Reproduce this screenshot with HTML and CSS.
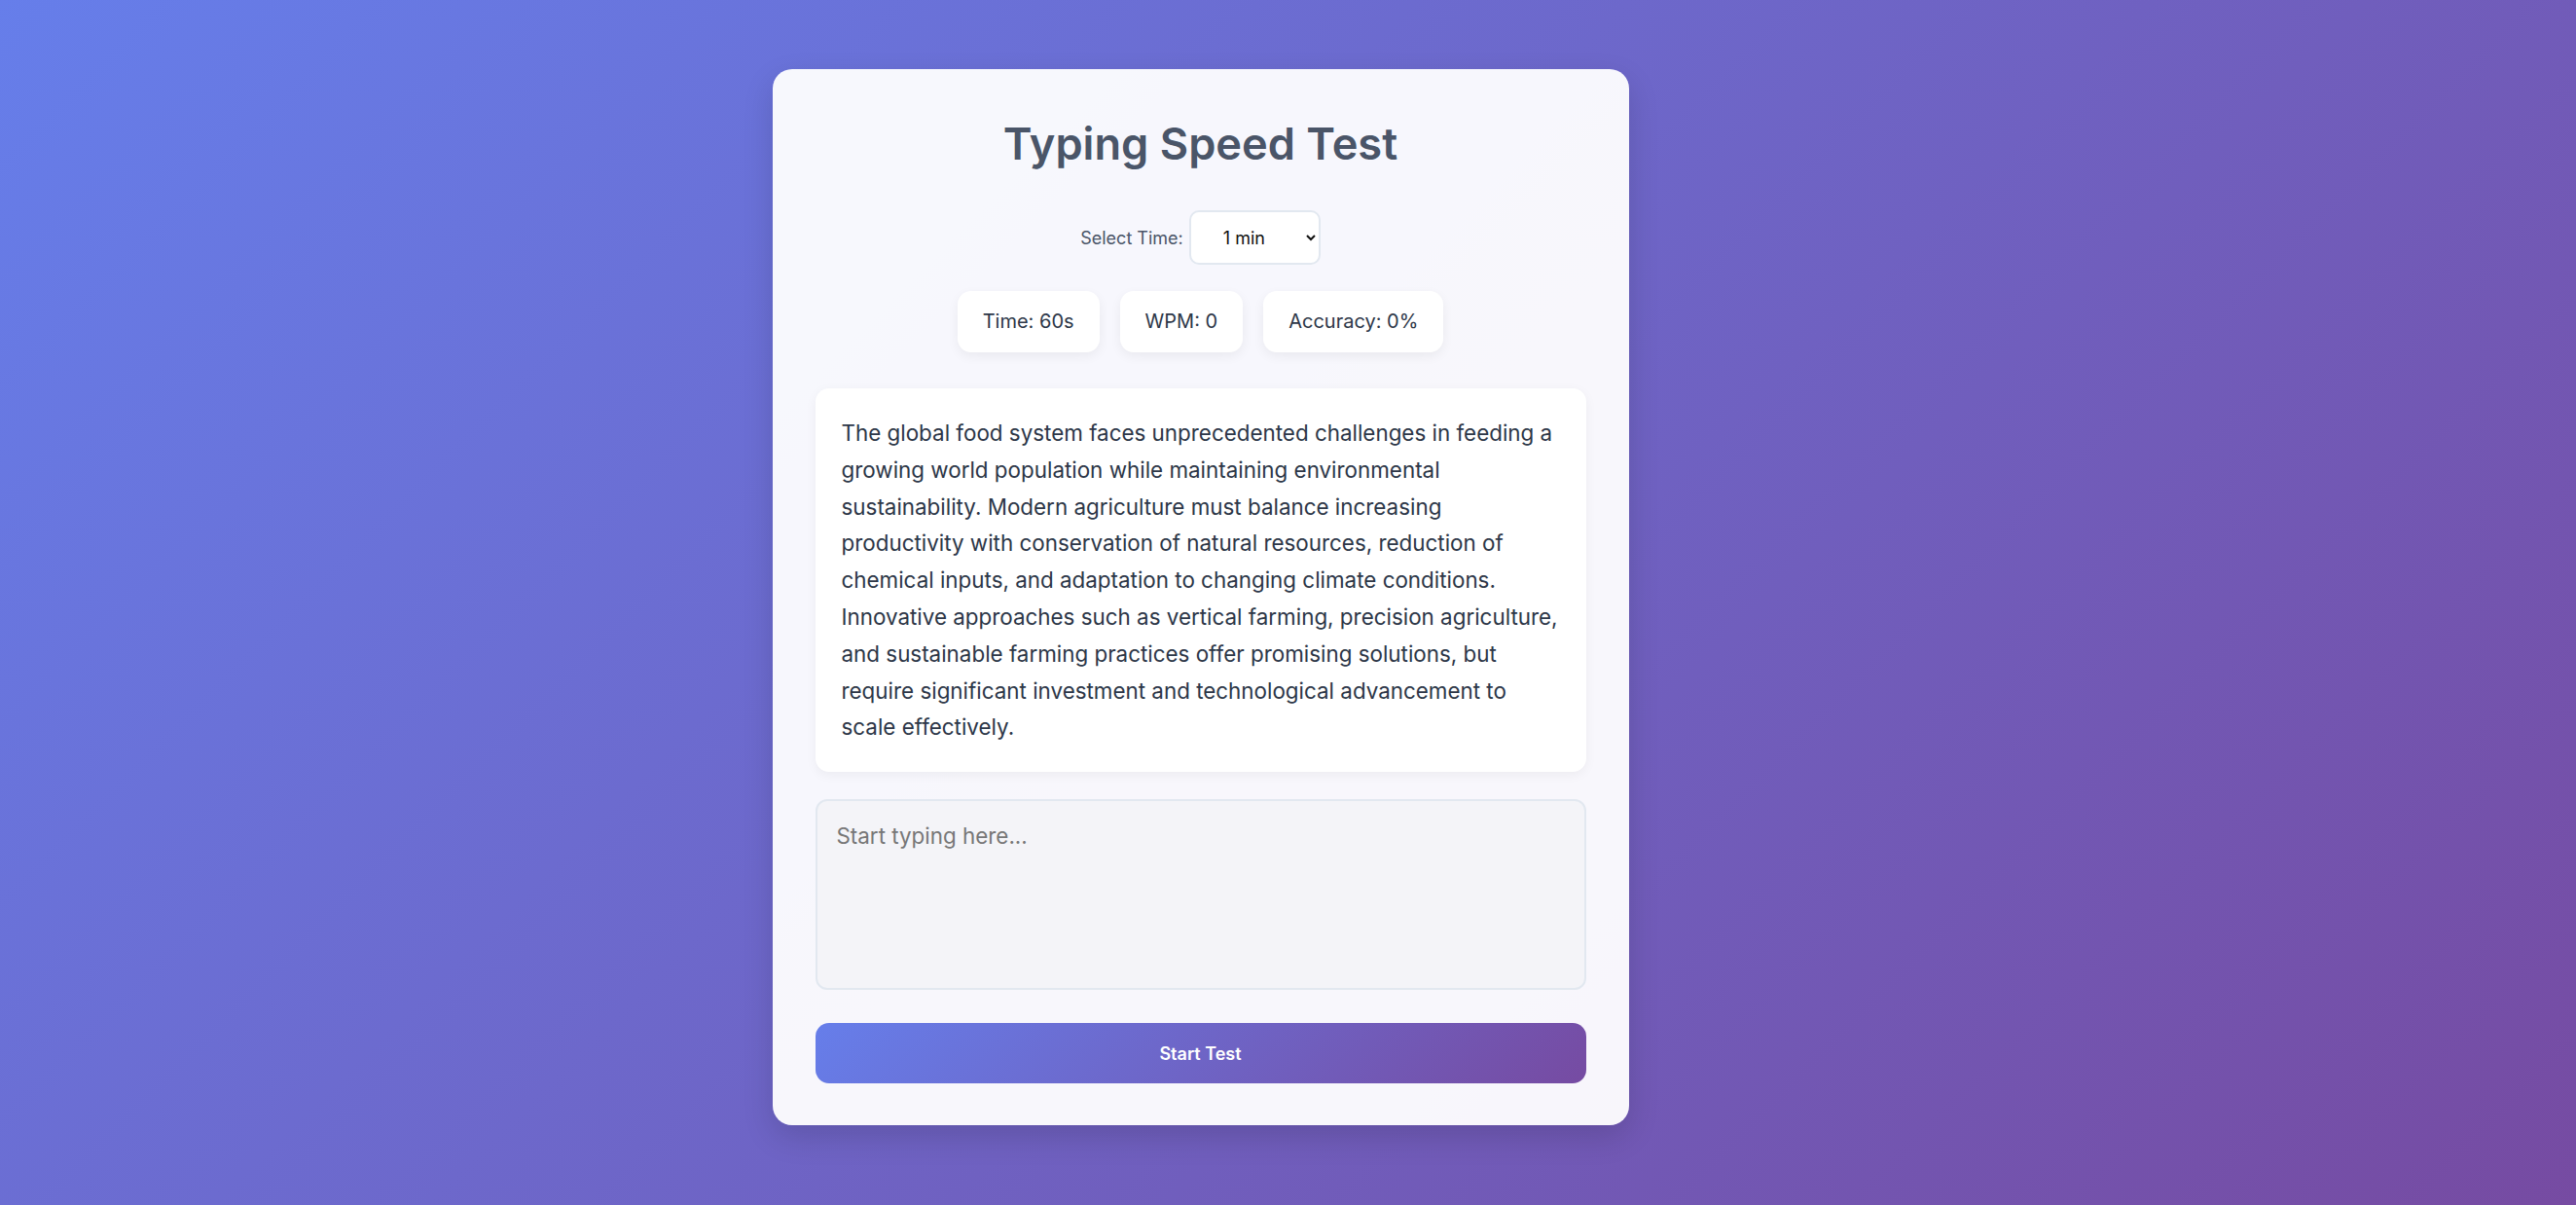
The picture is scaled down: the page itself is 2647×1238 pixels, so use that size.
FILE: index.html
```html
<!DOCTYPE html>
<html lang="en">
<head>
<meta charset="utf-8">
<title>Typing Speed Test</title>
<link rel="stylesheet" href="styles.css">
</head>
<body>
<main class="card">
  <h1 class="title">Typing Speed Test</h1>
  <div class="time-select">
    <label class="time-label" for="duration">Select Time:</label>
    <select class="time-dropdown" id="duration">
      <option>1 min</option>
      <option>2 min</option>
      <option>5 min</option>
    </select>
  </div>
  <div class="stats">
    <div class="stat">Time: 60s</div>
    <div class="stat">WPM: 0</div>
    <div class="stat">Accuracy: 0%</div>
  </div>
  <div class="passage">The global food system faces unprecedented challenges in feeding a growing world population while maintaining environmental sustainability. Modern agriculture must balance increasing productivity with conservation of natural resources, reduction of chemical inputs, and adaptation to changing climate conditions. Innovative approaches such as vertical farming, precision agriculture, and sustainable farming practices offer promising solutions, but require significant investment and technological advancement to scale effectively.</div>
  <textarea class="typing-area" placeholder="Start typing here..."></textarea>
  <button class="start-btn" type="button">Start Test</button>
</main>
</body>
</html>
```
FILE: styles.css
```css
* {
  box-sizing: border-box;
}

html, body {
  margin: 0;
  height: 100%;
}

body {
  font-family: "Inter", "Noto Sans", sans-serif;
  background: linear-gradient(135deg, #667eea 0%, #764ba2 100%);
  display: flex;
  justify-content: center;
  align-items: flex-start;
  padding: 71px 180px 0 0;
  overflow: hidden;
}

.card {
  width: 880px;
  background: rgba(255, 255, 255, 0.95);
  border-radius: 20px;
  padding: 50px 44px 43px;
  box-shadow: 0 12px 32px rgba(0, 0, 0, 0.14);
  display: flex;
  flex-direction: column;
}

.title {
  margin: 0 0 41px;
  font-size: 45.2px;
  font-weight: 600;
  line-height: 54px;
  text-align: center;
  color: #4a5568;
}

.time-select {
  display: flex;
  justify-content: center;
  align-items: center;
  height: 56px;
  margin-bottom: 27px;
}

.time-label {
  font-size: 18px;
  color: #4a5568;
  margin-right: 6px;
}

.time-dropdown {
  width: 135px;
  height: 56px;
  font-family: "Inter", sans-serif;
  font-size: 18px;
  color: #111;
  background: #fff;
  border: 2px solid #e2e8f0;
  border-radius: 10px;
  padding: 0 10px 0 29px;
}

.stats {
  display: flex;
  justify-content: center;
  gap: 21px;
  margin-bottom: 37px;
}

.stat {
  background: #fff;
  border-radius: 14px;
  padding: 0 26px;
  height: 63px;
  line-height: 63px;
  font-size: 20px;
  color: #2d3748;
  box-shadow: 0 4px 12px rgba(0, 0, 0, 0.06);
}

.passage {
  background: #fff;
  border-radius: 14px;
  padding: 27px;
  font-size: 22.4px;
  line-height: 37.8px;
  color: #2d3748;
  box-shadow: 0 3px 12px rgba(0, 0, 0, 0.05);
  margin-bottom: 28px;
}

.typing-area {
  display: block;
  width: 100%;
  height: 196px;
  resize: none;
  font-family: "Inter", sans-serif;
  font-size: 22.4px;
  line-height: 33.6px;
  color: #2d3748;
  background: #f4f4f8;
  border: 2px solid #e2e8f0;
  border-radius: 12px;
  padding: 19px 20px;
  margin: 0 0 34px;
  outline: none;
}

.typing-area::placeholder {
  color: #777;
}

.start-btn {
  display: block;
  width: 100%;
  height: 62px;
  border: none;
  border-radius: 14px;
  background: linear-gradient(135deg, #667eea 0%, #764ba2 100%);
  color: #fff;
  font-family: "Inter", sans-serif;
  font-size: 18px;
  font-weight: 600;
  cursor: pointer;
}
```
